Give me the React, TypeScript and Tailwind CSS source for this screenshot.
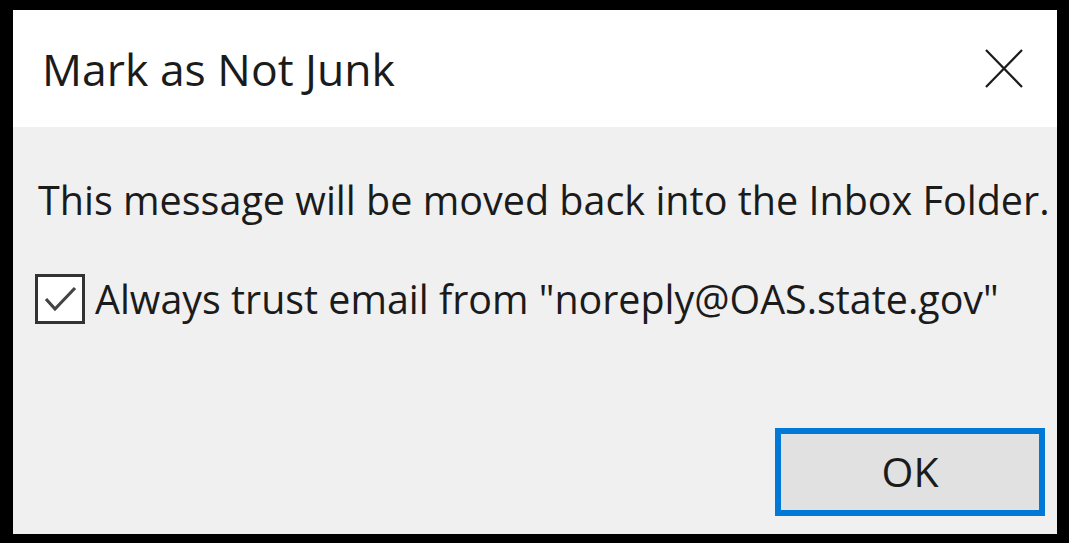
export default function App() {
  return (
    <div className="w-[1069px] h-[543px] bg-black pl-[13px] pt-[10px] pr-[12px] pb-[9px] flex font-['Open_Sans',sans-serif]">
      <div className="flex-1 flex flex-col bg-[#f0f0f0]">
        {/* title bar */}
        <div className="h-[117px] shrink-0 bg-white flex items-start justify-between pl-[29px] pr-[34px]">
          <h1 className="mt-[27px] text-[44.5px] leading-[64px] text-[#1b1b1b] font-normal">
            Mark as Not Junk
          </h1>
          <svg width="38" height="39" viewBox="0 0 38 39" className="mt-[39px]">
            <path d="M1 1 L37 38 M37 1 L1 38" stroke="#1b1b1b" strokeWidth="2.2" fill="none" />
          </svg>
        </div>

        {/* body */}
        <div className="flex-1 flex flex-col">
          <p className="mt-[47px] pl-[25px] text-[39.5px] leading-[52px] text-[#1b1b1b] whitespace-nowrap">
            This message will be moved back into the Inbox Folder.
          </p>
          <label className="mt-[46px] pl-[22px] flex items-start gap-[10px]">
            <span className="mt-[2px] w-[50px] h-[50px] border-[3px] border-[#333] bg-white flex items-center justify-center">
              <svg width="36" height="28" viewBox="0 0 36 28">
                <path d="M4 14 L13 24 L33 3" stroke="#444" strokeWidth="3.2" fill="none" />
              </svg>
            </span>
            <span className="mt-[1px] text-[39.4px] leading-[52px] text-[#1b1b1b] whitespace-nowrap">
              Always trust email from "noreply@OAS.state.gov"
            </span>
          </label>
          <div className="mt-auto mb-[18px] mr-[12px] flex justify-end">
            <button className="w-[270px] h-[88px] border-[6px] border-[#0078d7] bg-[#e1e1e1] text-[41px] text-[#1b1b1b]">
              OK
            </button>
          </div>
        </div>
      </div>
    </div>
  );
}
